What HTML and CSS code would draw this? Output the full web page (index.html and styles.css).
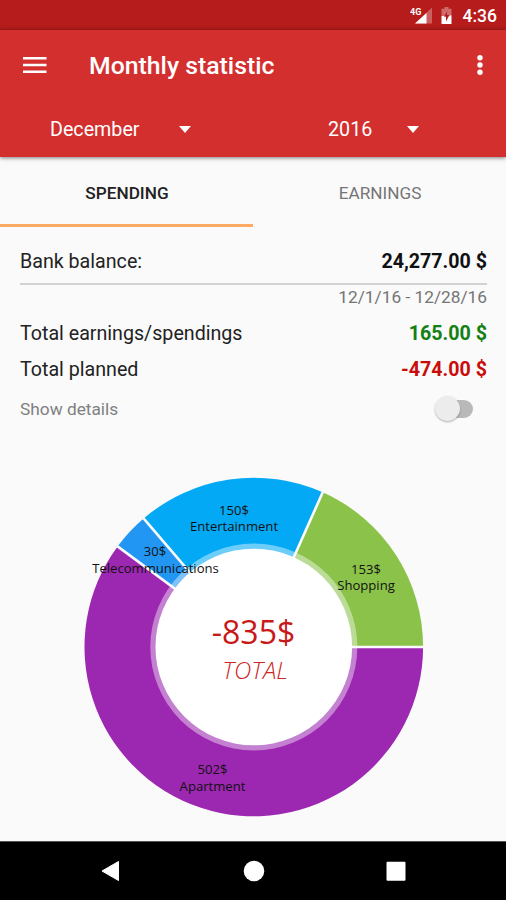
FILE: index.html
```html
<!DOCTYPE html>
<html lang="en">
<head>
<meta charset="utf-8">
<title>Monthly statistic</title>
<link rel="stylesheet" href="styles.css">
</head>
<body>
<div class="screen">
  <div class="status-bar">
    <svg class="status-icon" width="46" height="20" viewBox="0 0 46 20">
      <text class="network" x="0" y="9">4G</text>
      <path d="M22 1.500V17.500H5z" fill="#fff" fill-opacity=".3"/>
      <path d="M16.500 7V17.500H5z" fill="#fff"/>
      <path d="M34.500 1h4v1.800h3V10h-10V2.800h3z" fill="#fff" fill-opacity=".35"/>
      <path d="M31.500 10h3.500l2.500-5v4.500h4V18h-10z" fill="#fff"/>
      <path d="M37.500 4.500l-3.500 6.300h2v4.700l3.500-6.500h-2z" fill="#b71c1c"/>
    </svg>
    <span class="clock">4:36</span>
  </div>
  <header class="app-bar">
    <div class="toolbar">
      <svg class="menu-icon" width="24" height="18" viewBox="0 0 24 18"><path d="M0 2.200h23.500M0 9h23.500M0 15.800h23.500" stroke="#fff" stroke-width="2.600"/></svg>
      <h1 class="title">Monthly statistic</h1>
      <svg class="more-icon" width="6" height="20" viewBox="0 0 6 20" fill="#fff"><circle cx="3" cy="2.800" r="2.700"/><circle cx="3" cy="10" r="2.700"/><circle cx="3" cy="17.200" r="2.700"/></svg>
    </div>
    <div class="pickers">
      <div class="picker month"><span>December</span><i class="caret"></i></div>
      <div class="picker year"><span>2016</span><i class="caret"></i></div>
    </div>
  </header>
  <nav class="tabs">
    <div class="tab active">SPENDING</div>
    <div class="tab">EARNINGS</div>
  </nav>
  <main class="summary">
    <div class="row balance"><span>Bank balance:</span><b>24,277.00 $</b></div>
    <div class="period">12/1/16 - 12/28/16</div>
    <div class="row total"><span>Total earnings/spendings</span><b class="gain">165.00 $</b></div>
    <div class="row planned"><span>Total planned</span><b class="loss">-474.00 $</b></div>
    <div class="row details"><span class="muted">Show details</span><span class="switch"></span></div>
  </main>
  <svg class="chart" width="506" height="411" viewBox="0 430 506 411">
    <g transform="translate(253.800 647)">
      <path fill="#9c27b0" d="M0 0H169.300A169.300 169.300 0 1 1 -136.200 -100.600Z"/>
      <path fill="#2196f3" d="M0 0L-136.200 -100.600A169.300 169.300 0 0 1 -110.200 -128.500Z"/>
      <path fill="#03a9f4" d="M0 0L-110.200 -128.500A169.300 169.300 0 0 1 68.900 -154.700Z"/>
      <path fill="#8bc34a" d="M0 0L68.900 -154.700A169.300 169.300 0 0 1 169.300 0Z"/>
      <circle r="103.500" fill="#fff" fill-opacity=".42"/>
      <path d="M0 0H171M0 0L-137.600 -101.600M0 0L-111.300 -129.800M0 0L69.600 -156.200" stroke="#fafafa" stroke-width="2.600"/>
      <circle r="98.300" fill="#fff"/>
    </g>
    <g class="labels">
      <text x="234" y="514.500">150$</text>
      <text x="234" y="530.500">Entertainment</text>
      <text x="155" y="556">30$</text>
      <text x="155.500" y="572.500">Telecommunications</text>
      <text x="366" y="573.500">153$</text>
      <text x="366" y="589.500">Shopping</text>
      <text x="212.500" y="774">502$</text>
      <text x="212.500" y="790.500">Apartment</text>
    </g>
    <text class="sum" x="253.500" y="644">-835$</text>
    <text class="sum-label" x="255" y="679">TOTAL</text>
  </svg>
  <footer class="nav-bar">
    <svg width="22" height="22" viewBox="0 0 22 22"><path d="M2 11L18.500 1.500V20.500Z" fill="#fff" stroke="#fff" stroke-linejoin="round"/></svg>
    <svg width="22" height="22" viewBox="0 0 22 22"><circle cx="11" cy="11" r="10.300" fill="#fff"/></svg>
    <svg width="22" height="22" viewBox="0 0 22 22"><rect x="1.500" y="1.700" width="19" height="19" rx="1" fill="#fff"/></svg>
  </footer>
</div>
</body>
</html>
```
FILE: styles.css
```css
* { box-sizing: border-box; }
body { margin: 0; font-family: Roboto, sans-serif; color: #222; background: #fafafa; }
.screen { width: 506px; height: 900px; display: flex; flex-direction: column; overflow: hidden; background: #fafafa; }
.status-bar { height: 30px; flex: none; background: linear-gradient(#b71c1c 25px, #ac1a1a); display: flex; justify-content: flex-end; align-items: center; padding: 2px 9px 0 0; color: #fff; }
.status-icon { margin: 0 7px 0 0; }
.network { font: 700 9px Roboto, sans-serif; fill: #fff; }
.clock { font-size: 17.500px; font-weight: 500; line-height: 28px; }
.app-bar { height: 127px; flex: none; background: #d32f2f; color: #fff; box-shadow: 0 1px 4px rgba(0,0,0,.5); }
.toolbar { height: 69px; display: flex; align-items: center; padding: 0 23px; }
.menu-icon { margin-right: 42px; }
.title { margin: 2px auto 0 0; font-size: 24.800px; font-weight: 500; line-height: 30px; }
.pickers { display: flex; height: 59px; padding: 2px 0 0 50px; }
.picker { display: flex; align-items: center; font-size: 19.700px; }
.month { width: 278px; }
.month span { width: 129px; }
.year span { width: 79px; }
.caret { width: 0; height: 0; border: 6px solid transparent; border-top: 7px solid #fff; border-bottom: 0; }
.tabs { display: flex; height: 70px; flex: none; font-size: 17.200px; }
.tab { flex: 1; display: flex; align-items: center; justify-content: center; padding: 4px 0 0 1px; border-bottom: 3px solid transparent; color: #757575; }
.active { color: #212121; border-color: #ffab66; font-weight: 500; }
.summary { height: 203px; flex: none; padding: 14px 19px 0 20px; font-size: 19.650px; }
.row { display: flex; justify-content: space-between; align-items: center; }
.row b { font-weight: 700; }
.balance { height: 44px; border-bottom: 2px solid #d2d2d2; padding-bottom: 2px; }
.balance b { color: #111; }
.period { height: 29px; font-size: 17.300px; line-height: 25px; text-align: right; color: #757575; }
.total, .planned { height: 37px; }
.total { padding-top: 1px; }
.gain { color: #138013; }
.loss { color: #c90c0c; }
.details { height: 41px; padding-right: 14px; }
.muted { font-size: 17.300px; color: #808080; }
.switch { width: 34px; height: 18px; border-radius: 9px; background: #b9b9b9; display: flex; align-items: center; }
.switch::before { content: ""; flex: none; width: 25px; height: 25px; margin-left: -4px; border-radius: 50%; background: #ececec; box-shadow: 0 1px 2px rgba(0,0,0,.3); }
.chart { flex: none; display: block; font-family: "Open Sans", sans-serif; }
.labels { font-size: 13.100px; text-anchor: middle; fill: #111; }
.sum { font-size: 32px; text-anchor: middle; fill: #c91818; }
.sum-label { font-size: 24px; font-style: italic; font-weight: 300; text-anchor: middle; fill: #cc2828; }
.nav-bar { height: 59px; flex: none; display: flex; justify-content: center; align-items: center; gap: 120.500px; padding-left: 1px; background: #000; border-top: 1px solid #555; }
```
